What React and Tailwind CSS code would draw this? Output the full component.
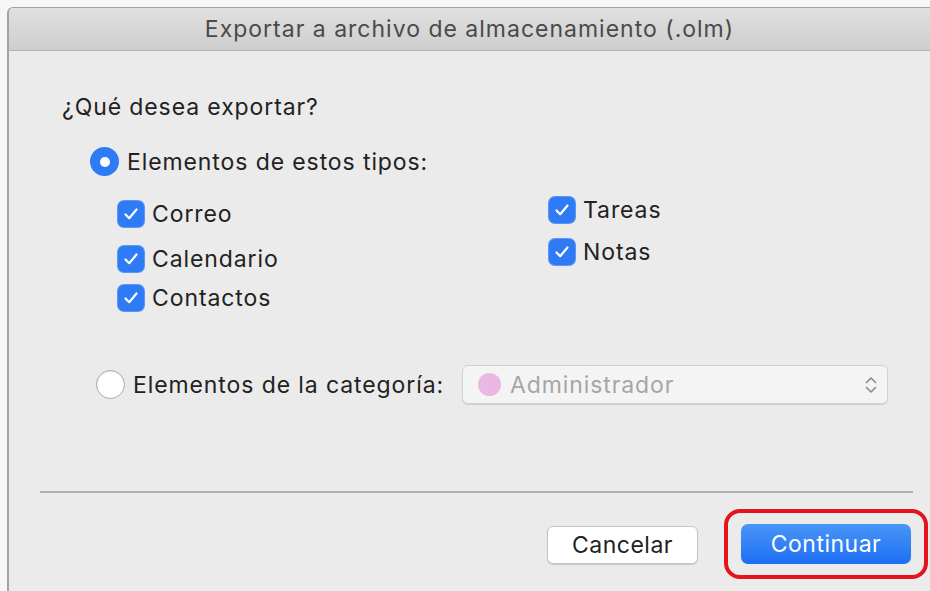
import React from 'react';

const font = { fontFamily: 'Inter, "Noto Sans", sans-serif' };

function CheckBox({ label }) {
  return (
    <div className="flex items-center">
      <span className="flex h-[26px] w-[26px] items-center justify-center rounded-[6px] bg-[#2f7bf5] shadow-[0_0_0_1px_#5b97f3]">
        <svg width="20" height="20" viewBox="0 0 20 20" fill="none">
          <path d="M4.5 10.5 8.2 14.2 15.5 5.5" stroke="white" strokeWidth="2.2" strokeLinecap="round" strokeLinejoin="round" />
        </svg>
      </span>
      <span className="ml-[8px] text-[23px] leading-[24px] tracking-[0.9px] text-[#222]">{label}</span>
    </div>
  );
}

function Radio({ checked }) {
  if (checked) {
    return (
      <span className="flex h-[29px] w-[29px] shrink-0 items-center justify-center rounded-full bg-[#2f7bf5]">
        <span className="h-[10px] w-[10px] rounded-full bg-white" />
      </span>
    );
  }
  return <span className="h-[29px] w-[29px] shrink-0 rounded-full border border-[#a8a8a8] bg-white shadow-[inset_0_1px_1px_rgba(0,0,0,0.08)]" />;
}

export default function App() {
  return (
    <div className="min-h-screen bg-[#f7f7f7] pl-[7px] pt-[7px]" style={font}>
      <div className="flex h-[584px] flex-col overflow-hidden rounded-tl-[6px] border-l-2 border-t border-[#a3a3a3] bg-[#ebebeb]">
        {/* title bar */}
        <div className="flex h-[43px] shrink-0 items-center justify-center border-b border-[#b4b4b4] bg-gradient-to-b from-[#e0e0e0] to-[#cecece]">
          <span className="text-[23px] tracking-[1px] text-[#4a4a4a]">Exportar a archivo de almacenamiento (.olm)</span>
        </div>

        <div className="flex flex-1 flex-col pl-[53px]">
          <div className="mt-[44px] text-[23px] leading-[24px] tracking-[0.9px] text-[#222]">¿Qué desea exportar?</div>

          <div className="ml-[28px] mt-[28px] flex items-center">
            <Radio checked />
            <span className="ml-[8px] text-[23px] leading-[24px] tracking-[0.9px] text-[#222]">Elementos de estos tipos:</span>
          </div>

          <div className="ml-[56px] mt-[21px] flex">
            <div className="flex w-[431px] flex-col pt-[4px]">
              <CheckBox label="Correo" />
              <div className="mt-[19px]"><CheckBox label="Calendario" /></div>
              <div className="mt-[13px]"><CheckBox label="Contactos" /></div>
            </div>
            <div className="flex flex-col">
              <CheckBox label="Tareas" />
              <div className="mt-[16px]"><CheckBox label="Notas" /></div>
            </div>
          </div>

          <div className="ml-[34px] mt-[54px] flex items-center">
            <Radio />
            <span className="ml-[8px] w-[329px] text-[23px] leading-[24px] tracking-[0.9px] text-[#222]">Elementos de la categoría:</span>
            <div className="flex h-[39px] w-[426px] items-center rounded-[6px] border border-[#d2d2d2] bg-[#f4f4f4] pl-[15px] pr-[9px] shadow-[0_1px_1px_rgba(0,0,0,0.12)]">
              <span className="h-[23px] w-[23px] rounded-full bg-[#ebb8e3]" />
              <span className="ml-[9px] text-[23px] leading-[24px] tracking-[0.9px] text-[#a6a6a6]">Administrador</span>
              <svg className="ml-auto" width="14" height="22" viewBox="0 0 14 22" fill="none">
                <path d="M2.5 8.5 7 4l4.5 4.5M2.5 13.5 7 18l4.5-4.5" stroke="#8a8a8a" strokeWidth="1.6" strokeLinecap="round" strokeLinejoin="round" />
              </svg>
            </div>
          </div>

          <div className="ml-[-22px] mr-[17px] mt-[87px] h-[2px] bg-[#b0b0b0]" />

          <div className="mr-[2px] mt-[16px] flex items-center justify-end">
            <button className="mt-[2px] h-[38px] w-[151px] rounded-[6px] border border-[#c4c4c4] bg-white text-[23px] tracking-[0.5px] text-[#222] shadow-[0_1px_1px_rgba(0,0,0,0.15)]">
              Cancelar
            </button>
            <div className="ml-[26px] rounded-[16px] border-[4px] border-[#e3141b] px-[13px] py-[11px]">
              <button className="h-[40px] w-[170px] rounded-[7px] bg-gradient-to-b from-[#4a95f8] to-[#1b6ef2] text-[23px] tracking-[0.5px] text-white">
                Continuar
              </button>
            </div>
          </div>
        </div>
      </div>
    </div>
  );
}
